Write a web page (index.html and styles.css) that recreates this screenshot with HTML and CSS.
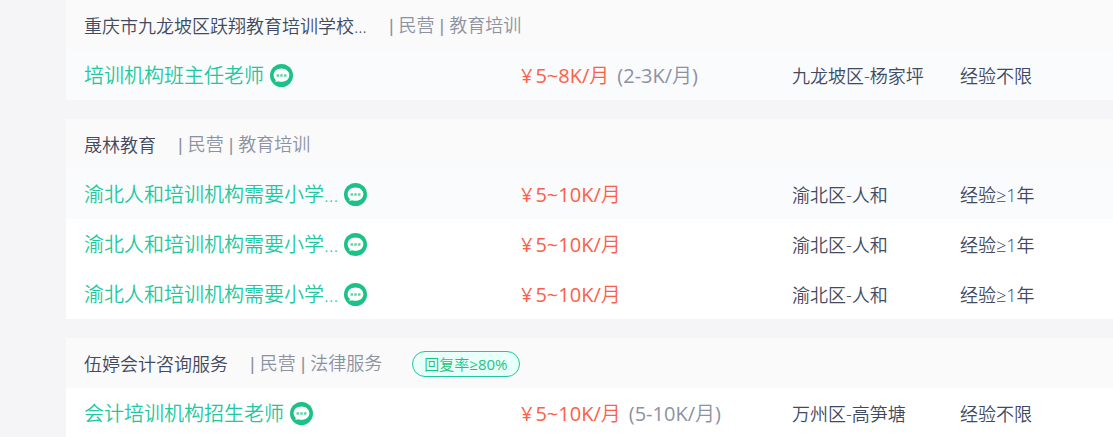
FILE: index.html
```html
<!DOCTYPE html>
<html lang="zh-CN">
<head>
<meta charset="utf-8">
<title>职位列表</title>
<meta name="viewport" content="width=device-width, initial-scale=1">
<link rel="stylesheet" href="styles.css">
</head>
<body>
<svg class="sprite" aria-hidden="true">
  <symbol id="chat" viewBox="0 0 24 24">
    <circle cx="12" cy="12" r="12" fill="#1bc286"/>
    <path d="M12 4.800c-4.700 0-8.200 2.900-8.200 6.900 0 2 .9 3.700 2.300 4.900l-.5 2.300 2.900-.8c1.100.4 2.200.5 3.500.5 4.700 0 8.200-3 8.200-6.900s-3.500-6.900-8.200-6.900z" fill="#fff"/>
    <path d="M6.800 10.600h2.600v2.600H6.800zM10.700 10.600h2.600v2.600h-2.600zM14.600 10.600h2.600v2.600h-2.600z" fill="#5fd3aa"/>
  </symbol>
</svg>
<main class="list">
  <section class="group">
    <header class="company">
      <a class="company-name" href="#">重庆市九龙坡区跃翔教育培训学校...</a>
      <span class="company-meta">| 民营 | 教育培训</span>
    </header>
    <article class="job job-tinted">
      <div class="title"><a class="title-link" href="#">培训机构班主任老师</a><button class="chat" type="button" aria-label="聊天"><svg class="chat-icon"><use href="#chat"/></svg></button></div>
      <div class="pay"><span class="amount"><span class="yen">¥</span>5~8K/月</span><span class="range">(2-3K/月)</span></div>
      <div class="area">九龙坡区-杨家坪</div>
      <div class="exp">经验不限</div>
    </article>
  </section>
  <section class="group">
    <header class="company">
      <a class="company-name" href="#">晟林教育</a>
      <span class="company-meta">| 民营 | 教育培训</span>
    </header>
    <article class="job job-tinted">
      <div class="title"><a class="title-link" href="#">渝北人和培训机构需要小学...</a><button class="chat" type="button" aria-label="聊天"><svg class="chat-icon"><use href="#chat"/></svg></button></div>
      <div class="pay"><span class="amount"><span class="yen">¥</span>5~10K/月</span></div>
      <div class="area">渝北区-人和</div>
      <div class="exp">经验≥1年</div>
    </article>
    <article class="job">
      <div class="title"><a class="title-link" href="#">渝北人和培训机构需要小学...</a><button class="chat" type="button" aria-label="聊天"><svg class="chat-icon"><use href="#chat"/></svg></button></div>
      <div class="pay"><span class="amount"><span class="yen">¥</span>5~10K/月</span></div>
      <div class="area">渝北区-人和</div>
      <div class="exp">经验≥1年</div>
    </article>
    <article class="job">
      <div class="title"><a class="title-link" href="#">渝北人和培训机构需要小学...</a><button class="chat" type="button" aria-label="聊天"><svg class="chat-icon"><use href="#chat"/></svg></button></div>
      <div class="pay"><span class="amount"><span class="yen">¥</span>5~10K/月</span></div>
      <div class="area">渝北区-人和</div>
      <div class="exp">经验≥1年</div>
    </article>
  </section>
  <section class="group">
    <header class="company">
      <a class="company-name" href="#">伍婷会计咨询服务</a>
      <span class="company-meta">| 民营 | 法律服务</span>
      <span class="badge">回复率≥80%</span>
    </header>
    <article class="job">
      <div class="title"><a class="title-link" href="#">会计培训机构招生老师</a><button class="chat" type="button" aria-label="聊天"><svg class="chat-icon"><use href="#chat"/></svg></button></div>
      <div class="pay"><span class="amount"><span class="yen">¥</span>5~10K/月</span><span class="range">(5-10K/月)</span></div>
      <div class="area">万州区-高笋塘</div>
      <div class="exp">经验不限</div>
    </article>
  </section>
</main>
</body>
</html>
```
FILE: styles.css
```css
* { box-sizing: border-box; }
body {
  margin: 0;
  background: #f5f5f7;
  color: #414a60;
  font-family: "Open Sans", "Noto Sans CJK SC DemiLight", "Noto Sans CJK SC", sans-serif;
  font-size: 18px;
  font-weight: 350;
  line-height: 24px;
}
a { color: inherit; text-decoration: none; }
.sprite { position: absolute; width: 0; height: 0; }
.list {
  display: flex;
  flex-direction: column;
  gap: 19px;
  padding-left: 66px;
}
.group { background: #fff; }
.company {
  display: flex;
  align-items: center;
  gap: 22px;
  min-height: 50px;
  padding: 2px 18px 0;
  background: #fafafa;
  white-space: nowrap;
}
.company-meta {
  color: #8d92a1;
  font-family: "Liberation Sans", "Noto Sans CJK SC DemiLight", "Noto Sans CJK SC", sans-serif;
}
.badge {
  margin-left: 8px;
  padding: 0 11px;
  border: 1px solid #1ec8a0;
  border-radius: 13px;
  background: #e9fffa;
  color: #1bc286;
  font-size: 15px;
  font-weight: 400;
}
.job {
  display: grid;
  grid-template-columns: 437fr 271fr 168fr 135fr;
  align-items: center;
  min-height: 50px;
  padding: 0 18px;
  white-space: nowrap;
}
.job-tinted { background: #fafbfd; }
.title {
  display: flex;
  align-items: center;
  gap: 6px;
  font-size: 20px;
}
.title-link {
  padding-top: 2px;
  color: #1ec8a0;
}
.chat {
  display: flex;
  padding: 0;
  border: 0;
  background: none;
}
.chat-icon { width: 23px; height: 23px; }
.pay {
  display: flex;
  gap: 8px;
  padding-top: 2px;
  font-size: 20px;
  font-weight: 400;
}
.amount { color: #fc6048; }
.yen { margin-right: 3px; }
.range { color: #8d92a1; }
.area, .exp { padding-top: 2px; }
```
